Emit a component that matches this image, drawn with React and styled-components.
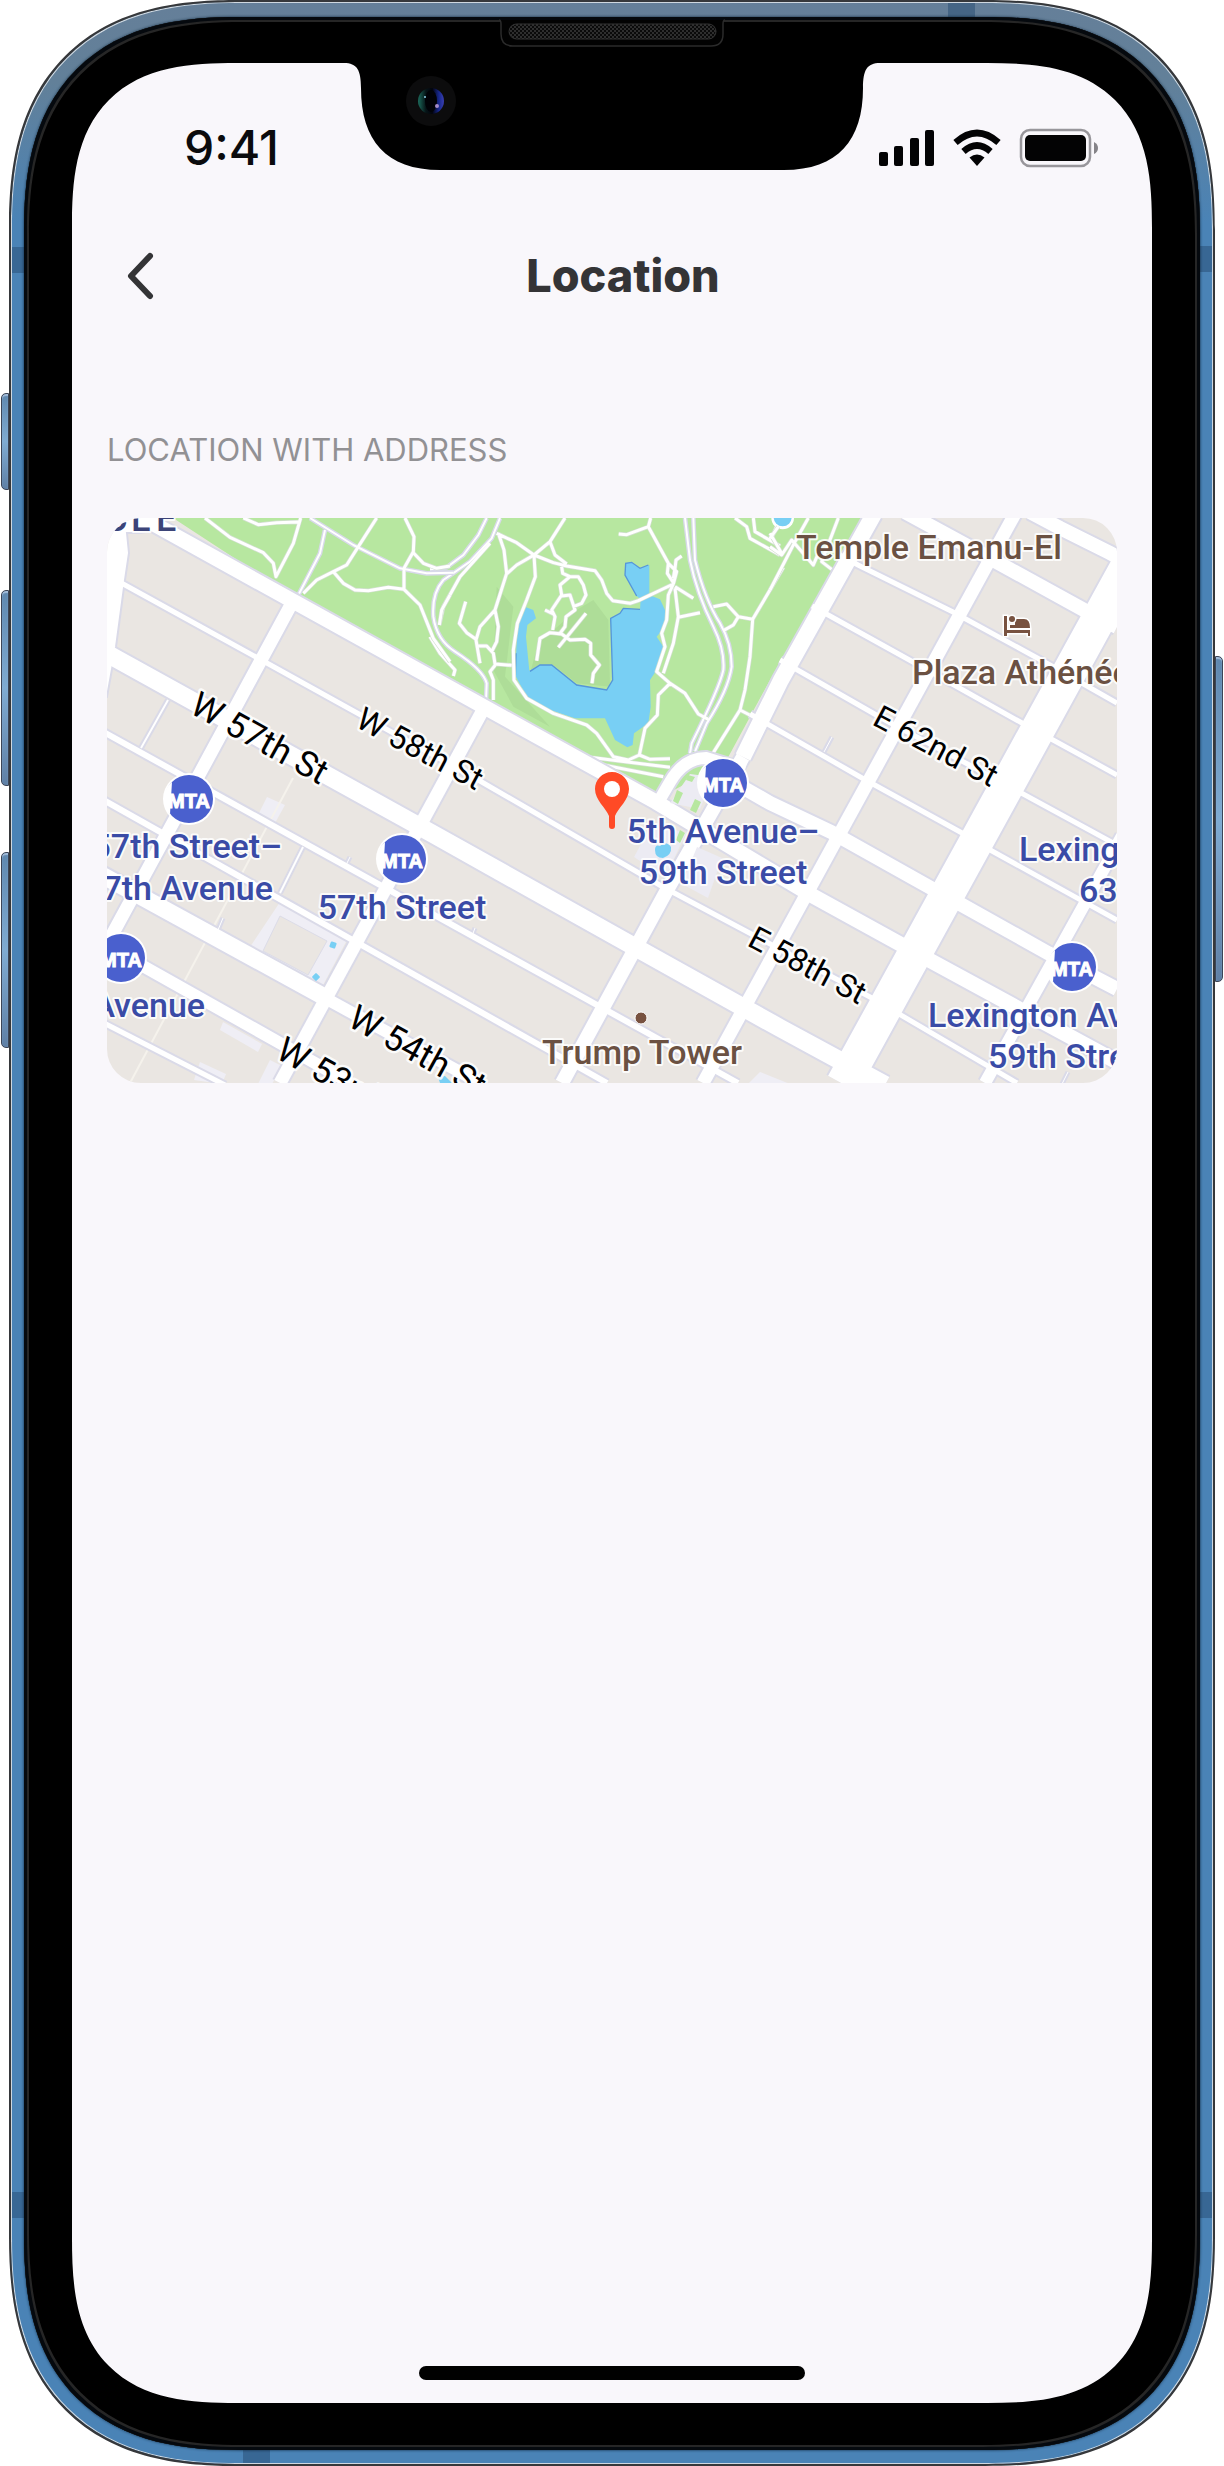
import React from "react";
import styled, { createGlobalStyle } from "styled-components";

const GlobalStyle = createGlobalStyle`
  *, *::before, *::after { box-sizing: border-box; }
  body {
    margin: 0;
    background: #ffffff;
    font-family: Inter, "Liberation Sans", sans-serif;
  }
`;

/* ---------- Device ---------- */

const Stage = styled.div`
  display: flex;
  justify-content: center;
  padding: 0 9px;
`;

const Phone = styled.div`
  position: relative;
  flex: 1;
  display: flex;
  max-width: 1206px;
  aspect-ratio: 1206 / 2466;
  padding: 15px 13px 14px;
  border: 2px solid #36383b;
  border-radius: 191px;
  background: linear-gradient(#657f99, #628099 80px, #4a83b6 220px);
  box-shadow: inset 0 0 0 1px #cfd8e0;
  @supports (corner-shape: superellipse(1.31)) {
    border-radius: 230px;
    corner-shape: superellipse(1.31);
  }
`;

const SideKey = styled.span`
  position: absolute;
  top: ${(p) => p.$top}px;
  ${(p) => p.$side}: -10px;
  width: 8px;
  height: ${(p) => p.$height}px;
  border: 1px solid #3c4557;
  border-radius: ${(p) => (p.$side === "left" ? "5px 0 0 5px" : "0 5px 5px 0")};
  background: linear-gradient(#5f88af, #7fabd2 50%, #5f80a6);
  box-shadow: inset 0 2px 1px #a5bedb;
`;

const Antenna = styled.span`
  position: absolute;
  ${(p) => p.$edge}: 1px;
  ${(p) => (p.$vertical ? "top" : "left")}: ${(p) => p.$offset}px;
  width: ${(p) => (p.$vertical ? 13 : 27)}px;
  height: ${(p) => (p.$vertical ? 26 : 14)}px;
  background: rgba(38, 76, 114, 0.5);
`;

const Bezel = styled.div`
  position: relative;
  flex: 1;
  display: flex;
  padding: 46px 48px 47px;
  border-radius: 176px;
  background: #000000;
  box-shadow: inset 0 0 0 3px #05090e, inset 0 0 0 5px #262626, 0 0 3px #0d2337;
  @supports (corner-shape: superellipse(1.31)) {
    border-radius: 215px;
    corner-shape: superellipse(1.31);
  }
`;

const Screen = styled.main`
  flex: 1;
  min-width: 0;
  display: flex;
  flex-direction: column;
  border-radius: 127px;
  background: #f9f7fb;
  @supports (corner-shape: superellipse(1.45)) {
    border-radius: 165px;
    corner-shape: superellipse(1.45);
  }
`;

const NotchArt = styled.svg`
  position: absolute;
  top: 0;
  left: 50%;
  width: 536px;
  height: 154px;
  margin-left: -268px;
`;

/* ---------- App chrome ---------- */

const StatusBar = styled.div`
  display: flex;
  align-items: center;
  justify-content: space-between;
  padding: 58px 54px 0 112px;
`;

const Clock = styled.time`
  font-size: 48px;
  font-weight: 500;
  line-height: 54px;
  color: #0b0b0d;
`;

const StatusArt = styled.svg`
  width: 220px;
  height: 40px;
`;

const NavBar = styled.header`
  display: flex;
  align-items: center;
  height: 100px;
  margin-top: 51px;
  padding: 0 79px 0 35px;
`;

const BackButton = styled.button`
  display: grid;
  place-items: center;
  width: 66px;
  height: 66px;
  padding: 0;
  border: 0;
  background: none;
  color: #343436;
`;

const Title = styled.h1`
  flex: 1;
  margin: 0;
  text-align: center;
  font-size: 45px;
  font-weight: 800;
  line-height: 56px;
  color: #343436;
`;

const Section = styled.section`
  display: flex;
  flex-direction: column;
  gap: 48px;
  padding: 104px 35px 0;
`;

const SectionLabel = styled.h2`
  margin: 0;
  font-size: 31px;
  font-weight: 400;
  line-height: 40px;
  color: #929194;
`;

const MapCard = styled.div`
  overflow: hidden;
  border-radius: 34px;
`;

const MapArt = styled.svg`
  display: block;
  width: 100%;
  height: auto;
`;

const HomeIndicator = styled.div`
  align-self: center;
  width: 36%;
  max-width: 386px;
  height: 14px;
  margin: auto 0 23px;
  border-radius: 7px;
  background: #000000;
`;

/* ---------- Map pieces ---------- */

const Casing = styled.path`
  fill: none;
  stroke: #dadae8;
  stroke-width: ${(p) => p.$w + 4}px;
`;

const Road = styled.path`
  fill: none;
  stroke: #ffffff;
  stroke-width: ${(p) => p.$w}px;
`;

const Trails = styled.path`
  fill: none;
  stroke: ${(p) => p.$color || "#ffffff"};
  stroke-width: ${(p) => p.$w || 9}px;
  stroke-linejoin: round;
`;

const Label = styled.text`
  font-family: Roboto, "Liberation Sans", sans-serif;
  font-size: ${(p) => p.$size || 34}px;
  font-weight: ${(p) => (p.$street ? 400 : 500)};
  fill: ${(p) => p.$color || "#3a4ba6"};
  stroke: #ffffff;
  stroke-width: ${(p) => (p.$street ? 5 : 4)}px;
  stroke-opacity: 0.85;
  stroke-linejoin: round;
  paint-order: stroke;
`;

const BadgeText = styled.text`
  font-family: "Liberation Sans", Arial, sans-serif;
  font-size: 20px;
  font-weight: 700;
  text-anchor: middle;
  fill: #ffffff;
  stroke: #ffffff;
  stroke-width: 1px;
`;

const ROADS = [
  { w: 15, d: "M143 518 L450 688 L656 802 L813 896 L931 961 L1021 1010 L1117 1062" },
  { w: 18, d: "M90 644 L115 658 L433 834 L633 946 L780 1028 L885 1085" },
  { w: 5, d: "M110 577 L125 585 L256 657 L480 781 L663 887 L757 937 L870 997 L1017 1083" },
  { w: 6, d: "M100 730 L738 1083" },
  { w: 6, d: "M100 798 L607 1083" },
  { w: 17, d: "M100 874 L330 1000" },
  { w: 12, d: "M325 998 L480 1083" },
  { w: 12, d: "M100 942 L150 970 L278 1042 L350 1083" },
  { w: 5, d: "M100 1021 L225 1085" },
  { w: 14, d: "M728 779 L770 803 L831 832 L931 888 L962 905 L1048 953 L1117 989" },
  { w: 5, d: "M750 714 L862 778 L962 833 L992 851 L1117 920" },
  { w: 5, d: "M780 660 L885 720 L990 776 L1117 845" },
  { w: 5, d: "M812 606 L913 662 L1022 723 L1117 775" },
  { w: 5, d: "M840 555 L858 565 L953 612 L1050 665 L1117 703" },
  { w: 14, d: "M905 512 L995 561 L1084 610 L1117 627" },
  { w: 14, d: "M1030 512 L1060 528 L1110 553 L1125 561" },
  { w: 13, d: "M293 601 L200 773 L100 957" },
  { w: 13, d: "M484 708 L280 1083" },
  { w: 16, d: "M874 514 L781 680 L743 757" },
  { w: 14, d: "M743 757 L667 890 L562 1083" },
  { w: 13, d: "M1016 512 L703 1083" },
  { w: 34, d: "M1154 518 L1003 793 L843 1084" },
  { w: 12, d: "M1122 836 L1084 905 L985 1083" },
  { w: 12, d: "M656 806 L670 782 Q684 758 706 758 L745 770" },
  { w: 2, d: "M168 700 L141 748" },
  { w: 2, d: "M303 847 L280 893" },
  { w: 1, d: "M832 737 L824 752" },
  { w: 1, d: "M223 918 L218 930" },
  { w: 1, d: "M350 857 L346 865" },
  { w: 1, d: "M475 928 L472 936" },
  { w: 1, d: "M1068 1072 L1062 1084" },
];

const WEST_TRAILS =
  "M315 24 L390 82 L490 128 L520 160 L528 200 L580 100 L602 24 M430 24 L475 44 L530 38 L595 36 " +
  "M830 24 L775 110 L740 165 L700 185 L650 210 L610 250 M700 185 L730 220 L765 240 L805 242 L865 232 L912 238 L960 285 L1000 385 L1050 455 " +
  "M915 24 L942 80 L940 125 L912 175 L912 238 M940 128 L970 160 L1010 175 L1050 168 M1050 255 L1025 300 L1018 345";

const WEST_DRIVES =
  "M630 24 L760 105 L900 175 L980 190 L1060 188 M675 60 L660 130 L595 255";

const LAKE_TRAILS =
  "M200 70 L260 98 L312 135 L370 158 L410 168 L495 182 L515 210 L530 250 L548 272 L600 280 L625 272 L730 222 " +
  "M405 24 L360 95 L312 135 M360 95 L375 135 L410 162 M205 70 L222 120 L230 190 L195 300 L150 350 L138 390 L150 460 " +
  "M312 135 L260 165 L232 190 M312 135 L316 200 L290 270 L262 340 L250 420 L252 510 L290 565 L370 610 L470 645 L500 670 L550 740 L595 750 L628 735 L660 748 L720 746 " +
  "M195 300 L205 350 L200 395 L185 425 M107 275 L88 340 L110 368 L138 388 M145 408 L170 408 L190 430 L195 462 L245 466 M195 466 L180 485 L190 510 L190 570 " +
  "M180 100 L90 200 L40 290 L28 345 M0 380 L30 430 L75 480 L70 498 " +
  "M395 170 L398 190 L420 200 L390 225 L395 255 L365 300 L375 320 L368 360 M420 200 L445 200 L460 225 L468 255 L455 280 L430 290 " +
  "M395 258 L420 255 L435 300 L408 320 L405 350 L390 370 M345 300 L370 312 M468 310 L385 412 " +
  "M320 452 L330 385 L360 368 L395 372 L420 390 L465 388 L482 400 L482 435 L508 465 L490 490 L486 520 " +
  "M662 24 L655 50 L590 74 L566 72 M655 50 L715 160 L740 185 L730 222 M755 138 L738 150 L735 175 L730 205 M715 160 L712 190 L730 218 " +
  "M730 222 L715 255 L710 330 L695 370 L705 410 L680 485 L720 520 L765 550 L805 612 L835 628 M735 235 L745 320 L730 400 L700 490 M745 322 L810 308 M735 230 L790 265 " +
  "M720 520 L685 555 L682 615 L645 655 L628 735 M850 290 L890 282 L925 320 L968 328 M925 320 L910 345 L880 362 " +
  "M1060 172 L968 328 L960 440 L945 540 L930 600 L850 728 M930 600 L965 618 " +
  "M915 24 L950 50 L960 85 L1050 135 M970 24 L975 65 L1050 108 M1020 95 L1040 50 M480 742 L720 772 M520 765 L700 800";

const LAKE_DRIVES =
  "M210 24 L185 85 L120 155 L40 210 Q5 250 10 320 Q20 390 75 425 Q160 480 170 520 L168 575 " +
  "M170 24 L145 75 L100 135 L50 172 L0 178 M0 188 L70 188 " +
  "M765 24 L780 150 Q800 250 850 350 Q885 420 880 480 Q870 530 785 700 L780 730 " +
  "M790 24 L795 150 Q825 270 870 340 Q905 400 905 470 Q895 540 830 640 L795 725";

const EAST_TRAILS =
  "M115 24 L75 95 L0 240 M205 24 L155 155 L185 178 M0 70 L35 130 M0 110 L35 135 L65 90 L130 165 L145 130 M0 85 L25 50";

const STATIONS = [
  { x: 189, y: 799 },
  { x: 402, y: 859 },
  { x: 121, y: 958 },
  { x: 723, y: 783 },
  { x: 1072, y: 967 },
];

const BROWN = "#6b5142";

const PLACE_LABELS = [
  { x: 929, y: 559, text: "Temple Emanu-El", anchor: "middle", color: BROWN },
  { x: 912, y: 684, text: "Plaza Athénée", color: BROWN },
  { x: 642, y: 1064, text: "Trump Tower", anchor: "middle", color: BROWN },
  { x: 282, y: 858, text: "57th Street–", anchor: "end" },
  { x: 273, y: 900, text: "7th Avenue", anchor: "end" },
  { x: 402, y: 919, text: "57th Street", anchor: "middle" },
  { x: 205, y: 1017, text: "Avenue", anchor: "end" },
  { x: 723, y: 843, text: "5th Avenue–", anchor: "middle" },
  { x: 723, y: 884, text: "59th Street", anchor: "middle" },
  { x: 1019, y: 861, text: "Lexing" },
  { x: 1079, y: 902, text: "63r" },
  { x: 928, y: 1027, text: "Lexington Av" },
  { x: 988, y: 1068, text: "59th Stre" },
];

const STREET_LABELS = [
  { x: 188, y: 712, angle: 29, size: 35, text: "W 57th St" },
  { x: 354, y: 726, angle: 28, size: 32, text: "W 58th St" },
  { x: 871, y: 724, angle: 28, size: 32, text: "E 62nd St" },
  { x: 746, y: 945, angle: 28, size: 32, text: "E 58th St" },
  { x: 346, y: 1025, angle: 29, size: 35, text: "W 54th St" },
  { x: 274, y: 1057, angle: 29, size: 35, text: "W 53rd" },
];

function Notch() {
  return (
    <NotchArt viewBox="344 17 536 154" aria-hidden="true">
      <defs>
        <pattern id="mesh" width="4" height="4" patternUnits="userSpaceOnUse">
          <rect width="4" height="4" fill="#0a0a0a" />
          <rect width="2" height="2" fill="#2e2e2e" />
          <rect x="2" y="2" width="2" height="2" fill="#2e2e2e" />
        </pattern>
        <linearGradient id="lens" x1="0" x2="1">
          <stop offset="0" stopColor="#1c6b5c" />
          <stop offset="0.3" stopColor="#061417" />
          <stop offset="0.55" stopColor="#02030c" />
          <stop offset="0.8" stopColor="#16278c" />
          <stop offset="1" stopColor="#3a3fb0" />
        </linearGradient>
      </defs>
      <path d="M344 50 H880 V63 C867 63 863 70 863 88 C863 140 838 170 784 170 H440 C386 170 361 140 361 88 C361 70 357 63 344 63 Z" />
      <path d="M499 20 Q501 20 501 24 V34 Q501 46 513 46 H711 Q723 46 723 34 V24 Q723 20 725 20" fill="#020202" stroke="#2b2b2b" strokeWidth="1.5" />
      <rect x="509" y="24" width="207" height="15" rx="7.5" fill="url(#mesh)" stroke="#333333" />
      <circle cx="431" cy="101" r="25" fill="#0c0c0d" />
      <circle cx="431" cy="101" r="13" fill="url(#lens)" />
      <ellipse cx="431" cy="101" rx="6" ry="11" fill="#010207" />
      <circle cx="425" cy="97" r="1" fill="#8fd0e8" />
      <circle cx="437" cy="106" r="2" fill="#a58bc9" />
    </NotchArt>
  );
}

function StatusIcons() {
  return (
    <StatusArt viewBox="878 128 220 40" role="img" aria-label="Signal, Wi-Fi and battery full">
      <g fill="#030304">
        <rect x="879" y="152" width="9" height="14" rx="2" />
        <rect x="894" y="146" width="9" height="20" rx="2" />
        <rect x="910" y="138" width="9" height="28" rx="2" />
        <rect x="925" y="130" width="9" height="36" rx="2" />
        <rect x="1025" y="135" width="61" height="26" rx="5" />
        <path d="M977 166 L969.5 157.5 Q977 151.5 984.5 157.5 Z" />
      </g>
      <g fill="none" stroke="#030304" strokeWidth="6.5">
        <path d="M955.5 142.5 Q977 123.5 998.5 142.5" />
        <path d="M963.5 151.5 Q977 139.5 990.5 151.5" />
      </g>
      <rect x="1021" y="130" width="69" height="36" rx="9" fill="none" stroke="#98969b" strokeWidth="2.5" />
      <path d="M1094 142 Q1098 144 1098 148 Q1098 152 1094 154 Z" fill="#858388" />
    </StatusArt>
  );
}

function StationBadge({ x, y }) {
  return (
    <g transform={`translate(${x} ${y})`}>
      <circle r="26" fill="#ffffff" />
      <circle r="24" fill="#4a60ce" />
      <path d="M-17 -17 Q-25 -10 -25 0 Q-25 10 -19 15 Z" fill="#ffffff" />
      <BadgeText x="0" y="9">
        MTA
      </BadgeText>
    </g>
  );
}

function LocationMap() {
  return (
    <MapArt viewBox="107 518 1010 565" role="img" aria-label="Map around 5th Avenue and 59th Street">
      <rect x="107" y="518" width="1010" height="565" fill="#eae6e2" />
      <path d="M170 516 H864 L770 680 L725 763 L657 799 L297 599 Z" fill="#b7e7a0" />

      <g transform="translate(430 510) scale(0.333333)">
        <path d="M300 490 L325 400 L440 300 L490 270 L535 330 L540 530 L440 520 L370 465 Z M200 230 L250 290 L225 500 L360 650 L250 590 L190 480 Z" fill="#aedd98" />
        <path d="M585 160 L605 157 L630 175 L658 165 L658 255 L690 268 L705 300 L705 350 L680 380 L700 410 L680 480 L660 510 L662 590 L655 640 L612 670 L608 705 L592 712 L555 690 L525 625 L435 625 L330 590 L290 560 L258 500 L258 440 L262 350 L288 292 L310 300 L318 325 L292 345 L288 380 L298 482 L330 465 L365 465 L440 525 L530 540 L548 510 L542 325 L570 310 L580 295 L630 300 L632 268 L620 258 L585 195 Z" fill="#78cff4" />
        <path d="M300 484 L330 465 L365 465 L440 525 L530 540 L548 510 L542 325 L570 310 L580 295 L630 298 M620 258 L585 195 L587 160 L605 157 L630 175 L655 165 M256 500 L258 430" fill="none" stroke="#5596da" strokeWidth="4" />
        <Trails $color="#d8d9ea" $w={14} d={LAKE_DRIVES} />
        <Trails $color="#d3dfd2" $w={13} d={LAKE_TRAILS} />
        <Trails d={LAKE_TRAILS} />
        <Trails $w={6} d={LAKE_DRIVES} />
      </g>
      <g transform="translate(100 510) scale(0.333333)">
        <Trails $color="#d8d9ea" $w={14} d={WEST_DRIVES} />
        <Trails $color="#d3dfd2" $w={13} d={WEST_TRAILS} />
        <Trails d={WEST_TRAILS} />
        <Trails $w={6} d={WEST_DRIVES} />
      </g>
      <g transform="translate(770 510) scale(0.333333)">
        <circle cx="38" cy="24" r="34" fill="#ffffff" />
        <circle cx="38" cy="22" r="27" fill="#78cff4" />
        <Trails $color="#d3dfd2" $w={13} d={EAST_TRAILS} />
        <Trails d={EAST_TRAILS} />
      </g>

      <g fill="#efeef5">
        <path d="M280 902 L347 940 L322 987 L250 947 Z" />
        <path d="M267 797 L285 805 L275 823 L258 815 Z" />
        <path d="M223 1022 L262 1044 L258 1052 L220 1030 Z" />
        <path d="M200 1062 L226 1074 L222 1084 L194 1080 Z" />
        <path d="M270 1060 L282 1066 L272 1084 L258 1084 Z" />
        <path d="M760 1072 L790 1084 L748 1084 Z" />
      </g>
      <path d="M280 916 L327 941 L308 975 L263 951 Z" fill="#eae6e2" stroke="#dcdce8" />
      <path d="M293 778 L130 1083" fill="none" stroke="#f5f2ec" strokeWidth="2" />

      {ROADS.map((r) => (
        <Casing key={r.d} $w={r.w} d={r.d} />
      ))}
      <path d="M100 510 L172 512 L160 530 L140 533 L127 533 L129 553 L125 580 L116 647 L107 697 L100 700 Z" fill="#ffffff" stroke="#dadae8" strokeWidth="2" />
      {ROADS.map((r) => (
        <Road key={r.d} $w={r.w} d={r.d} />
      ))}

      <g fill="#ecebf3">
        <path d="M634 857 L652 824 L686 833 L665 878 Z" />
        <path d="M697 847 L722 858 L708 898 L682 884 Z" />
        <path d="M670 803 L690 774 L713 777 L700 809 Z" />
      </g>
      <g fill="#b7e7a0">
        <path d="M677 790 L683 793 L678 804 L673 801 Z" />
        <path d="M695 799 L701 802 L696 813 L690 810 Z" />
        <path d="M688 775 L695 777 L692 782 L686 780 Z" />
        <path d="M680 830 L685 833 L680 843 L676 840 Z" />
      </g>
      <path d="M655 850 Q655 844 660 846 Q666 840 671 847 Q672 855 663 858 Q655 858 655 850 Z" fill="#78cff4" />
      <g fill="#78cff4">
        <rect x="330" y="942" width="6" height="6" rx="1" transform="rotate(20 333 945)" />
        <rect x="313" y="974" width="6" height="6" rx="1" transform="rotate(45 316 977)" />
        <path d="M438 1077 L445 1076 L452 1083 H440 Z" />
      </g>

      <Label x="104 131 156" y="531" $size={36} $color="#3c4478">
        CLE
      </Label>
      {STREET_LABELS.map((l) => (
        <Label key={l.text} $street $color="#000000" $size={l.size} transform={`translate(${l.x} ${l.y}) rotate(${l.angle})`}>
          {l.text}
        </Label>
      ))}
      {STATIONS.map((s) => (
        <StationBadge key={`${s.x}-${s.y}`} {...s} />
      ))}
      {PLACE_LABELS.map((l) => (
        <Label key={`${l.x}-${l.y}`} x={l.x} y={l.y} textAnchor={l.anchor} $color={l.color}>
          {l.text}
        </Label>
      ))}

      <circle cx="641" cy="1018" r="6" fill="#785240" stroke="#ffffff" strokeWidth="1" />
      <g fill="#785240" stroke="#ffffff" strokeWidth="3" paintOrder="stroke">
        <path d="M1004 616 H1007 V630 H1030 V636 H1028 V633 H1007 V636 H1004 Z" />
        <path d="M1015 619 H1024 Q1030 619 1030 628 H1010 V625 H1015 Z" />
        <circle cx="1012" cy="619" r="3" />
      </g>

      <path
        d="M612 772 C602 772 595 780 595 789 C595 800 606 808 609 816 V826 Q609 829 612 829 Q615 829 615 826 V816 C618 808 629 800 629 789 C629 780 622 772 612 772 Z"
        fill="#ff4a26"
      />
      <circle cx="612" cy="789" r="8" fill="#ffffff" />
    </MapArt>
  );
}

export default function App() {
  return (
    <>
      <GlobalStyle />
      <Stage>
        <Phone>
          <SideKey $side="left" $top={391} $height={97} />
          <SideKey $side="left" $top={588} $height={196} />
          <SideKey $side="left" $top={850} $height={196} />
          <SideKey $side="right" $top={654} $height={326} />
          <Antenna $vertical $edge="left" $offset={245} />
          <Antenna $vertical $edge="right" $offset={244} />
          <Antenna $vertical $edge="left" $offset={2190} />
          <Antenna $vertical $edge="right" $offset={2190} />
          <Antenna $edge="top" $offset={937} />
          <Antenna $edge="bottom" $offset={232} />
          <Bezel>
            <Screen>
              <StatusBar>
                <Clock>9:41</Clock>
                <StatusIcons />
              </StatusBar>
              <NavBar>
                <BackButton type="button" aria-label="Back">
                  <svg width="30" height="50" viewBox="0 0 30 50" fill="none" stroke="currentColor" strokeWidth="6" strokeLinecap="round" strokeLinejoin="round" aria-hidden="true">
                    <path d="M25 5 L6 25 L25 45" />
                  </svg>
                </BackButton>
                <Title>Location</Title>
              </NavBar>
              <Section>
                <SectionLabel>LOCATION WITH ADDRESS</SectionLabel>
                <MapCard>
                  <LocationMap />
                </MapCard>
              </Section>
              <HomeIndicator />
            </Screen>
            <Notch />
          </Bezel>
        </Phone>
      </Stage>
    </>
  );
}
